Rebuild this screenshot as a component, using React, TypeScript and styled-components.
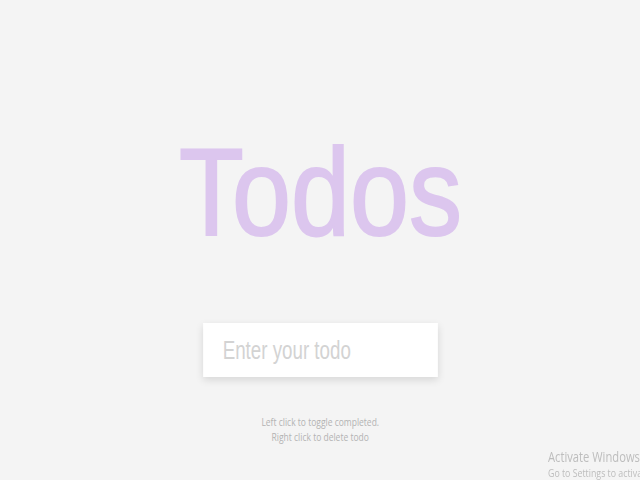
import React from "react";
import styled, { createGlobalStyle } from "styled-components";

const GlobalStyle = createGlobalStyle`
  html, body {
    margin: 0;
    padding: 0;
    background: #f4f4f4;
    overflow: hidden;
  }
  body {
    font-family: "Liberation Sans", Arial, sans-serif;
  }
`;

const Page = styled.main`
  min-height: 100vh;
  display: flex;
  flex-direction: column;
  align-items: center;
  padding-top: 130px;
  box-sizing: border-box;
`;

const Title = styled.h1`
  margin: 0;
  font-family: "Liberation Sans", Arial, sans-serif;
  font-weight: 400;
  font-size: 124px;
  line-height: 124px;
  color: #dcc6ee;
  -webkit-text-stroke: 2px #dcc6ee;
  transform: scaleX(0.855);
  transform-origin: center;
`;

const Form = styled.form`
  margin-top: 69px;
  display: flex;
  justify-content: center;
  width: 235px;
  height: 54px;
`;

const Input = styled.input`
  flex: none;
  width: 313px;
  height: 54px;
  box-sizing: border-box;
  border: none;
  outline: none;
  background: #ffffff;
  padding: 0 26px;
  font-family: "Liberation Sans", Arial, sans-serif;
  font-size: 25px;
  color: #555;
  box-shadow: 0 3px 9px rgba(0, 0, 0, 0.12);
  transform: scaleX(0.75);
  transform-origin: center;
  &::placeholder {
    color: #d3d3d3;
  }
`;

const Hint = styled.p`
  margin: 38px 0 0;
  text-align: center;
  font-family: "Open Sans", "Noto Sans", sans-serif;
  font-size: 10px;
  line-height: 15px;
  color: #b3b3b3;
  transform: scaleX(0.85);
`;

const Watermark = styled.div`
  position: fixed;
  left: 548px;
  bottom: 0;
  white-space: nowrap;
  font-family: "Open Sans", "Noto Sans", sans-serif;
  color: #bdbdbd;
  transform: scaleX(0.8);
  transform-origin: left bottom;
`;

const WatermarkTitle = styled.div`
  font-size: 14px;
  line-height: 18px;
`;

const WatermarkSub = styled.div`
  font-size: 11px;
  line-height: 14px;
`;

export default function App() {
  return (
    <>
      <GlobalStyle />
      <Page>
        <Title>Todos</Title>
        <Form onSubmit={(e) => e.preventDefault()}>
          <Input placeholder="Enter your todo" />
        </Form>
        <Hint>
          Left click to toggle completed.
          <br />
          Right click to delete todo
        </Hint>
      </Page>
      <Watermark>
        <WatermarkTitle>Activate Windows</WatermarkTitle>
        <WatermarkSub>Go to Settings to activate Windows.</WatermarkSub>
      </Watermark>
    </>
  );
}
